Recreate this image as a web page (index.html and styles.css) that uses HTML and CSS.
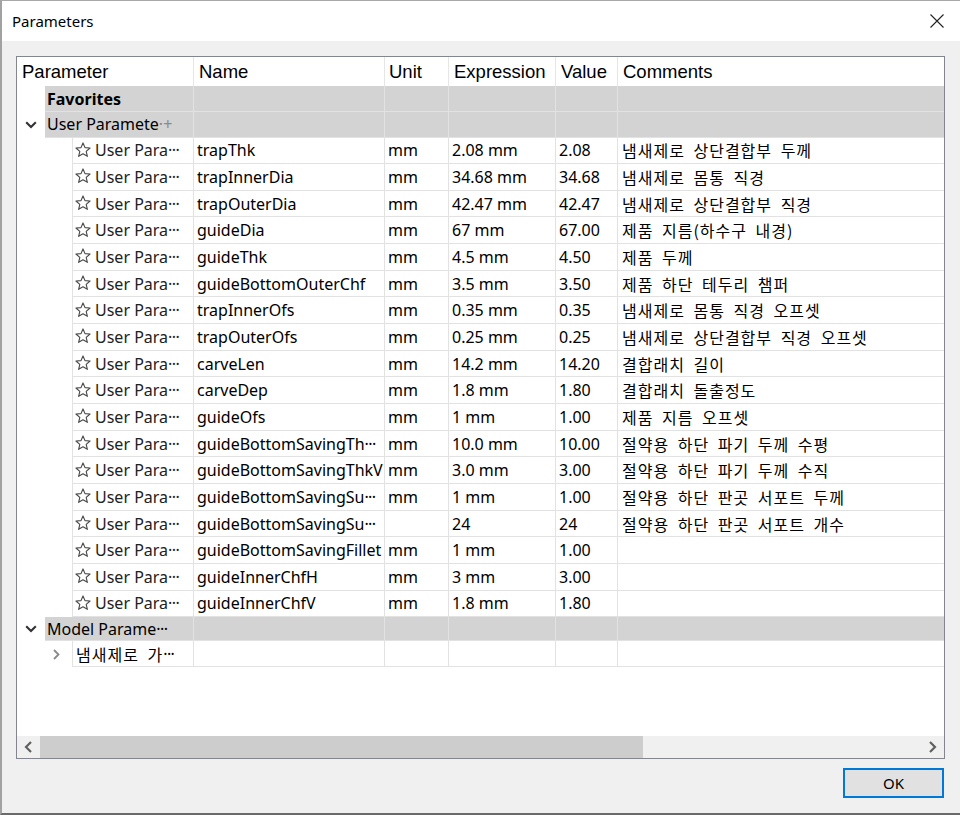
FILE: index.html
```html
<!DOCTYPE html>
<html>
<head>
<meta charset="utf-8">
<title>Parameters</title>
<link rel="stylesheet" href="styles.css">
</head>
<body>
<div class="window">
  <div class="titlebar">
    <span class="title">Parameters</span>
    <svg class="close" width="14" height="14" viewBox="0 0 14 14"><path d="M0.5 0.5 L13.5 13.5 M13.5 0.5 L0.5 13.5" stroke="#222" stroke-width="1.1" fill="none"/></svg>
  </div>
  <div class="body">
    <div class="frame">
      <div class="grid">
        <div class="row head">
          <div class="cell">Parameter</div>
          <div class="cell">Name</div>
          <div class="cell">Unit</div>
          <div class="cell">Expression</div>
          <div class="cell">Value</div>
          <div class="cell last">Comments</div>
        </div>

        <div class="row group fav">
          <div class="cell first"><span class="indent g"></span><span class="lbl bold">Favorites</span></div>
          <div class="cell"></div><div class="cell"></div><div class="cell"></div><div class="cell"></div><div class="cell last"></div>
        </div>

        <div class="row group user">
          <div class="cell first"><span class="indent g"><svg class="chev" width="12" height="8" viewBox="0 0 12 8"><path d="M1.2 1.2 L6 6 L10.8 1.2" stroke="#333" stroke-width="2.1" fill="none"/></svg></span><span class="lbl">User Paramete<span class="plus">·+</span></span></div>
          <div class="cell"></div><div class="cell"></div><div class="cell"></div><div class="cell"></div><div class="cell last"></div>
        </div>

        <div class="row data"><div class="cell first"><span class="indent d"></span><span class="lbl"><svg class="star" width="16" height="16" viewBox="0 0 14 14"><path d="M7 0.8 L8.75 4.9 L13.18 5.29 L9.8 8.2 L10.82 12.56 L7 10.25 L3.18 12.56 L4.2 8.2 L0.82 5.29 L5.25 4.9 Z" stroke="#4a4a4a" stroke-width="1" fill="none" stroke-linejoin="round"/></svg>User Para<span class="ell">···</span></span></div><div class="cell">trapThk</div><div class="cell">mm</div><div class="cell">2.08 mm</div><div class="cell">2.08</div><div class="cell last ko">냄새제로 상단결합부 두께</div></div>

        <div class="row data"><div class="cell first"><span class="indent d"></span><span class="lbl"><svg class="star" width="16" height="16" viewBox="0 0 14 14"><path d="M7 0.8 L8.75 4.9 L13.18 5.29 L9.8 8.2 L10.82 12.56 L7 10.25 L3.18 12.56 L4.2 8.2 L0.82 5.29 L5.25 4.9 Z" stroke="#4a4a4a" stroke-width="1" fill="none" stroke-linejoin="round"/></svg>User Para<span class="ell">···</span></span></div><div class="cell">trapInnerDia</div><div class="cell">mm</div><div class="cell">34.68 mm</div><div class="cell">34.68</div><div class="cell last ko">냄새제로 몸통 직경</div></div>

        <div class="row data"><div class="cell first"><span class="indent d"></span><span class="lbl"><svg class="star" width="16" height="16" viewBox="0 0 14 14"><path d="M7 0.8 L8.75 4.9 L13.18 5.29 L9.8 8.2 L10.82 12.56 L7 10.25 L3.18 12.56 L4.2 8.2 L0.82 5.29 L5.25 4.9 Z" stroke="#4a4a4a" stroke-width="1" fill="none" stroke-linejoin="round"/></svg>User Para<span class="ell">···</span></span></div><div class="cell">trapOuterDia</div><div class="cell">mm</div><div class="cell">42.47 mm</div><div class="cell">42.47</div><div class="cell last ko">냄새제로 상단결합부 직경</div></div>

        <div class="row data"><div class="cell first"><span class="indent d"></span><span class="lbl"><svg class="star" width="16" height="16" viewBox="0 0 14 14"><path d="M7 0.8 L8.75 4.9 L13.18 5.29 L9.8 8.2 L10.82 12.56 L7 10.25 L3.18 12.56 L4.2 8.2 L0.82 5.29 L5.25 4.9 Z" stroke="#4a4a4a" stroke-width="1" fill="none" stroke-linejoin="round"/></svg>User Para<span class="ell">···</span></span></div><div class="cell">guideDia</div><div class="cell">mm</div><div class="cell">67 mm</div><div class="cell">67.00</div><div class="cell last ko">제품 지름(하수구 내경)</div></div>

        <div class="row data"><div class="cell first"><span class="indent d"></span><span class="lbl"><svg class="star" width="16" height="16" viewBox="0 0 14 14"><path d="M7 0.8 L8.75 4.9 L13.18 5.29 L9.8 8.2 L10.82 12.56 L7 10.25 L3.18 12.56 L4.2 8.2 L0.82 5.29 L5.25 4.9 Z" stroke="#4a4a4a" stroke-width="1" fill="none" stroke-linejoin="round"/></svg>User Para<span class="ell">···</span></span></div><div class="cell">guideThk</div><div class="cell">mm</div><div class="cell">4.5 mm</div><div class="cell">4.50</div><div class="cell last ko">제품 두께</div></div>

        <div class="row data"><div class="cell first"><span class="indent d"></span><span class="lbl"><svg class="star" width="16" height="16" viewBox="0 0 14 14"><path d="M7 0.8 L8.75 4.9 L13.18 5.29 L9.8 8.2 L10.82 12.56 L7 10.25 L3.18 12.56 L4.2 8.2 L0.82 5.29 L5.25 4.9 Z" stroke="#4a4a4a" stroke-width="1" fill="none" stroke-linejoin="round"/></svg>User Para<span class="ell">···</span></span></div><div class="cell">guideBottomOuterChf</div><div class="cell">mm</div><div class="cell">3.5 mm</div><div class="cell">3.50</div><div class="cell last ko">제품 하단 테두리 챔퍼</div></div>

        <div class="row data"><div class="cell first"><span class="indent d"></span><span class="lbl"><svg class="star" width="16" height="16" viewBox="0 0 14 14"><path d="M7 0.8 L8.75 4.9 L13.18 5.29 L9.8 8.2 L10.82 12.56 L7 10.25 L3.18 12.56 L4.2 8.2 L0.82 5.29 L5.25 4.9 Z" stroke="#4a4a4a" stroke-width="1" fill="none" stroke-linejoin="round"/></svg>User Para<span class="ell">···</span></span></div><div class="cell">trapInnerOfs</div><div class="cell">mm</div><div class="cell">0.35 mm</div><div class="cell">0.35</div><div class="cell last ko">냄새제로 몸통 직경 오프셋</div></div>

        <div class="row data"><div class="cell first"><span class="indent d"></span><span class="lbl"><svg class="star" width="16" height="16" viewBox="0 0 14 14"><path d="M7 0.8 L8.75 4.9 L13.18 5.29 L9.8 8.2 L10.82 12.56 L7 10.25 L3.18 12.56 L4.2 8.2 L0.82 5.29 L5.25 4.9 Z" stroke="#4a4a4a" stroke-width="1" fill="none" stroke-linejoin="round"/></svg>User Para<span class="ell">···</span></span></div><div class="cell">trapOuterOfs</div><div class="cell">mm</div><div class="cell">0.25 mm</div><div class="cell">0.25</div><div class="cell last ko">냄새제로 상단결합부 직경 오프셋</div></div>

        <div class="row data"><div class="cell first"><span class="indent d"></span><span class="lbl"><svg class="star" width="16" height="16" viewBox="0 0 14 14"><path d="M7 0.8 L8.75 4.9 L13.18 5.29 L9.8 8.2 L10.82 12.56 L7 10.25 L3.18 12.56 L4.2 8.2 L0.82 5.29 L5.25 4.9 Z" stroke="#4a4a4a" stroke-width="1" fill="none" stroke-linejoin="round"/></svg>User Para<span class="ell">···</span></span></div><div class="cell">carveLen</div><div class="cell">mm</div><div class="cell">14.2 mm</div><div class="cell">14.20</div><div class="cell last ko">결합래치 길이</div></div>

        <div class="row data"><div class="cell first"><span class="indent d"></span><span class="lbl"><svg class="star" width="16" height="16" viewBox="0 0 14 14"><path d="M7 0.8 L8.75 4.9 L13.18 5.29 L9.8 8.2 L10.82 12.56 L7 10.25 L3.18 12.56 L4.2 8.2 L0.82 5.29 L5.25 4.9 Z" stroke="#4a4a4a" stroke-width="1" fill="none" stroke-linejoin="round"/></svg>User Para<span class="ell">···</span></span></div><div class="cell">carveDep</div><div class="cell">mm</div><div class="cell">1.8 mm</div><div class="cell">1.80</div><div class="cell last ko">결합래치 돌출정도</div></div>

        <div class="row data"><div class="cell first"><span class="indent d"></span><span class="lbl"><svg class="star" width="16" height="16" viewBox="0 0 14 14"><path d="M7 0.8 L8.75 4.9 L13.18 5.29 L9.8 8.2 L10.82 12.56 L7 10.25 L3.18 12.56 L4.2 8.2 L0.82 5.29 L5.25 4.9 Z" stroke="#4a4a4a" stroke-width="1" fill="none" stroke-linejoin="round"/></svg>User Para<span class="ell">···</span></span></div><div class="cell">guideOfs</div><div class="cell">mm</div><div class="cell">1 mm</div><div class="cell">1.00</div><div class="cell last ko">제품 지름 오프셋</div></div>

        <div class="row data"><div class="cell first"><span class="indent d"></span><span class="lbl"><svg class="star" width="16" height="16" viewBox="0 0 14 14"><path d="M7 0.8 L8.75 4.9 L13.18 5.29 L9.8 8.2 L10.82 12.56 L7 10.25 L3.18 12.56 L4.2 8.2 L0.82 5.29 L5.25 4.9 Z" stroke="#4a4a4a" stroke-width="1" fill="none" stroke-linejoin="round"/></svg>User Para<span class="ell">···</span></span></div><div class="cell">guideBottomSavingTh<span class="ell">···</span></div><div class="cell">mm</div><div class="cell">10.0 mm</div><div class="cell">10.00</div><div class="cell last ko">절약용 하단 파기 두께 수평</div></div>

        <div class="row data"><div class="cell first"><span class="indent d"></span><span class="lbl"><svg class="star" width="16" height="16" viewBox="0 0 14 14"><path d="M7 0.8 L8.75 4.9 L13.18 5.29 L9.8 8.2 L10.82 12.56 L7 10.25 L3.18 12.56 L4.2 8.2 L0.82 5.29 L5.25 4.9 Z" stroke="#4a4a4a" stroke-width="1" fill="none" stroke-linejoin="round"/></svg>User Para<span class="ell">···</span></span></div><div class="cell">guideBottomSavingThkV</div><div class="cell">mm</div><div class="cell">3.0 mm</div><div class="cell">3.00</div><div class="cell last ko">절약용 하단 파기 두께 수직</div></div>

        <div class="row data"><div class="cell first"><span class="indent d"></span><span class="lbl"><svg class="star" width="16" height="16" viewBox="0 0 14 14"><path d="M7 0.8 L8.75 4.9 L13.18 5.29 L9.8 8.2 L10.82 12.56 L7 10.25 L3.18 12.56 L4.2 8.2 L0.82 5.29 L5.25 4.9 Z" stroke="#4a4a4a" stroke-width="1" fill="none" stroke-linejoin="round"/></svg>User Para<span class="ell">···</span></span></div><div class="cell">guideBottomSavingSu<span class="ell">···</span></div><div class="cell">mm</div><div class="cell">1 mm</div><div class="cell">1.00</div><div class="cell last ko">절약용 하단 판곳 서포트 두께</div></div>

        <div class="row data"><div class="cell first"><span class="indent d"></span><span class="lbl"><svg class="star" width="16" height="16" viewBox="0 0 14 14"><path d="M7 0.8 L8.75 4.9 L13.18 5.29 L9.8 8.2 L10.82 12.56 L7 10.25 L3.18 12.56 L4.2 8.2 L0.82 5.29 L5.25 4.9 Z" stroke="#4a4a4a" stroke-width="1" fill="none" stroke-linejoin="round"/></svg>User Para<span class="ell">···</span></span></div><div class="cell">guideBottomSavingSu<span class="ell">···</span></div><div class="cell"></div><div class="cell">24</div><div class="cell">24</div><div class="cell last ko">절약용 하단 판곳 서포트 개수</div></div>

        <div class="row data"><div class="cell first"><span class="indent d"></span><span class="lbl"><svg class="star" width="16" height="16" viewBox="0 0 14 14"><path d="M7 0.8 L8.75 4.9 L13.18 5.29 L9.8 8.2 L10.82 12.56 L7 10.25 L3.18 12.56 L4.2 8.2 L0.82 5.29 L5.25 4.9 Z" stroke="#4a4a4a" stroke-width="1" fill="none" stroke-linejoin="round"/></svg>User Para<span class="ell">···</span></span></div><div class="cell">guideBottomSavingFillet</div><div class="cell">mm</div><div class="cell">1 mm</div><div class="cell">1.00</div><div class="cell last ko"></div></div>

        <div class="row data"><div class="cell first"><span class="indent d"></span><span class="lbl"><svg class="star" width="16" height="16" viewBox="0 0 14 14"><path d="M7 0.8 L8.75 4.9 L13.18 5.29 L9.8 8.2 L10.82 12.56 L7 10.25 L3.18 12.56 L4.2 8.2 L0.82 5.29 L5.25 4.9 Z" stroke="#4a4a4a" stroke-width="1" fill="none" stroke-linejoin="round"/></svg>User Para<span class="ell">···</span></span></div><div class="cell">guideInnerChfH</div><div class="cell">mm</div><div class="cell">3 mm</div><div class="cell">3.00</div><div class="cell last ko"></div></div>

        <div class="row data"><div class="cell first"><span class="indent d"></span><span class="lbl"><svg class="star" width="16" height="16" viewBox="0 0 14 14"><path d="M7 0.8 L8.75 4.9 L13.18 5.29 L9.8 8.2 L10.82 12.56 L7 10.25 L3.18 12.56 L4.2 8.2 L0.82 5.29 L5.25 4.9 Z" stroke="#4a4a4a" stroke-width="1" fill="none" stroke-linejoin="round"/></svg>User Para<span class="ell">···</span></span></div><div class="cell">guideInnerChfV</div><div class="cell">mm</div><div class="cell">1.8 mm</div><div class="cell">1.80</div><div class="cell last ko"></div></div>

        <div class="row group model">
          <div class="cell first"><span class="indent g"><svg class="chev" width="12" height="8" viewBox="0 0 12 8"><path d="M1.2 1.2 L6 6 L10.8 1.2" stroke="#333" stroke-width="2.1" fill="none"/></svg></span><span class="lbl">Model Parame<span class="ell">···</span></span></div>
          <div class="cell"></div><div class="cell"></div><div class="cell"></div><div class="cell"></div><div class="cell last"></div>
        </div>

        <div class="row child">
          <div class="cell first"><span class="indent c"><svg class="chev-r" width="7" height="11" viewBox="0 0 7 11"><path d="M1 1 L5.5 5.5 L1 10" stroke="#8a8a8a" stroke-width="1.8" fill="none"/></svg></span><span class="lbl ko">냄새제로 가<span class="ell2">···</span></span></div>
          <div class="cell"></div><div class="cell"></div><div class="cell"></div><div class="cell"></div><div class="cell last"></div>
        </div>
      </div>
      <div class="filler"></div>
      <div class="hscroll">
        <div class="sbtn"><svg width="9" height="12" viewBox="0 0 9 12"><path d="M7 1 L2 6 L7 11" stroke="#606060" stroke-width="2.2" fill="none"/></svg></div>
        <div class="track"><div class="thumb"></div></div>
        <div class="sbtn"><svg width="9" height="12" viewBox="0 0 9 12"><path d="M2 1 L7 6 L2 11" stroke="#606060" stroke-width="2.2" fill="none"/></svg></div>
      </div>
    </div>
    <div class="footer">
      <button class="ok">OK</button>
    </div>
  </div>
</div>
</body>
</html>
```

FILE: styles.css
```css
html, body {
  margin: 0;
  padding: 0;
}
body {
  width: 960px;
  height: 815px;
  overflow: hidden;
  background: #f0f0f0;
  font-family: "Noto Sans", "Noto Sans CJK KR", sans-serif;
}
.window {
  box-sizing: border-box;
  width: 960px;
  height: 815px;
  border-left: 2px solid #a2a2a2;
  border-top: 1px solid #a8a8a8;
  border-bottom: 2px solid #6a6a6a;
  display: flex;
  flex-direction: column;
  background: #f0f0f0;
}
.titlebar {
  height: 40px;
  flex: none;
  background: #fff;
  display: flex;
  align-items: center;
  justify-content: space-between;
  padding: 0 16px 0 10px;
}
.title {
  font-size: 15px;
  color: #000;
}
.close {
  display: block;
}
.body {
  flex: 1;
  display: flex;
  flex-direction: column;
  padding: 15px 15px 0 14px;
}
.frame {
  box-sizing: border-box;
  width: 929px;
  height: 703px;
  border: 1px solid #82878f;
  background: #fff;
  display: flex;
  flex-direction: column;
}
.grid {
  display: flex;
  flex-direction: column;
}
.row {
  display: grid;
  grid-template-columns: 177px 191px 64px 107px 62px 1fr;
  font-size: 16px;
  color: #000;
}
.cell {
  box-sizing: border-box;
  border-right: 1px solid #e2e2e2;
  border-bottom: 1px solid #e2e2e2;
  padding-left: 3px;
  display: flex;
  align-items: center;
  white-space: nowrap;
  overflow: hidden;
}
.cell.last {
  border-right: none;
  padding-left: 4px;
}
.row.head {
  height: 29px;
  font-family: "Liberation Sans", Arial, sans-serif;
  font-size: 18.5px;
}
.row.head .cell {
  border-bottom: none;
  padding-left: 5px;
  border-right-color: #e6e6e6;
}
.row.head .cell:nth-child(3) {
  padding-left: 4px;
}
.row.data { height: 26.67px; }
.row.fav { height: 26px; }
.row.user { height: 25.5px; }
.row.model { height: 24px; }
.row.child { height: 26px; }

.cell.first {
  padding-left: 0;
  border-bottom: none;
  align-items: stretch;
}
.indent {
  flex: none;
  display: flex;
  align-items: center;
  justify-content: center;
}
.indent.g { width: 28px; }
.indent.d { width: 55px; }
.indent.c {
  width: 55px;
  justify-content: flex-end;
  padding-right: 12px;
  box-sizing: border-box;
}
.lbl {
  flex: 1;
  display: flex;
  align-items: center;
  border-bottom: 1px solid #e2e2e2;
  min-width: 0;
  overflow: hidden;
}
.row.data .lbl, .row.child .lbl {
  border-left: 1px solid #e2e2e2;
  padding-left: 3px;
}
.row.group .lbl {
  padding-left: 2px;
}
.row.group .cell:not(.first),
.row.group .lbl {
  background: #d3d3d3;
}
.bold { font-weight: 700; }
.plus { color: #8a8a8a; }
.ell { letter-spacing: -0.6px; }
.ell2 {
  letter-spacing: -0.6px;
  word-spacing: 0;
  font-family: "Noto Sans", sans-serif;
}
.star {
  flex: none;
  margin-right: 4px;
  margin-left: -1px;
  margin-top: -1px;
}
.row.data .lbl { color: #222; }
.chev { display: block; }
.chev-r { display: block; }
.ko {
  font-family: "Noto Sans CJK KR", sans-serif;
  letter-spacing: 1px;
  word-spacing: 4px;
}
.filler {
  flex: 1;
}
.hscroll {
  height: 22px;
  flex: none;
  display: flex;
  background: #f0f0f0;
}
.sbtn {
  width: 23px;
  flex: none;
  display: flex;
  align-items: center;
  justify-content: center;
}
.track {
  flex: 1;
  display: flex;
}
.thumb {
  width: 603px;
  background: #cdcdcd;
}
.footer {
  display: flex;
  justify-content: flex-end;
  padding-top: 9px;
  padding-right: 1px;
}
.ok {
  box-sizing: border-box;
  width: 101px;
  height: 30px;
  border: 2px solid #0078d7;
  background: #e1e1e1;
  font-family: "Noto Sans", sans-serif;
  font-size: 15px;
  color: #000;
  padding: 0;
  margin: 0;
}
```
